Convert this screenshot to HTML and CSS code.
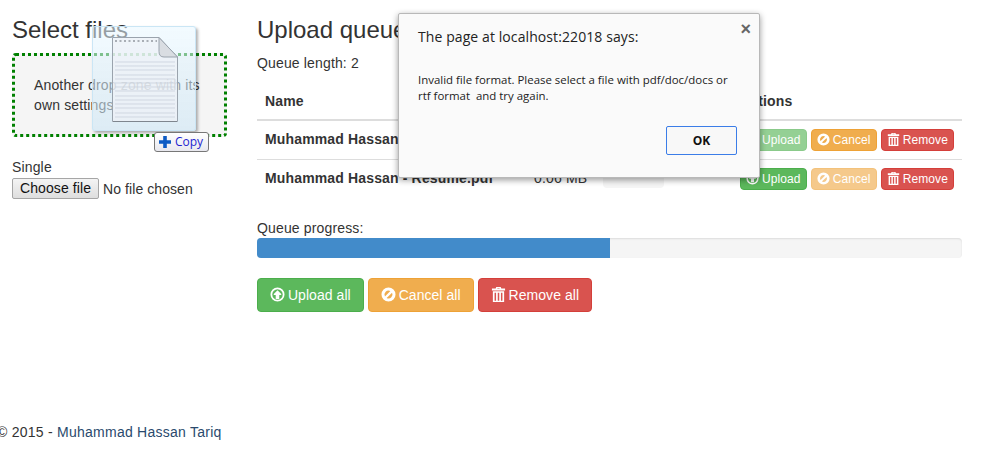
FILE: index.html
```html
<!DOCTYPE html>
<html lang="en">
<head>
<meta charset="utf-8">
<title>File upload</title>
<link rel="stylesheet" href="styles.css">
</head>
<body>
<svg class="defs" width="0" height="0" aria-hidden="true">
  <symbol id="i-up" viewBox="0 0 16 16"><path fill-rule="evenodd" d="M8 .5a7.500 7.500 0 1 1 0 15A7.500 7.500 0 0 1 8 .5zm0 1.900a5.600 5.600 0 1 0 0 11.200A5.600 5.600 0 0 0 8 2.400zM8 3.400l4 4.100v.9H9.900v4.300H6.100V8.400H4v-.9z"/></symbol>
  <symbol id="i-ban" viewBox="0 0 16 16"><path fill-rule="evenodd" d="M8 .5a7.500 7.500 0 1 1 0 15A7.500 7.500 0 0 1 8 .5zM4.200 10l5.800-5.800A4.300 4.300 0 0 0 4.200 10zm1.800 1.800a4.300 4.300 0 0 0 5.800-5.800z"/></symbol>
  <symbol id="i-trash" viewBox="0 0 16 16"><path fill-rule="evenodd" d="M5.600 0h4.800l.6 1.600h4v2H1v-2h4zM6.900 1l-.2.6h2.600l-.2-.6zM2 4.600h12V16H2zM3.800 6v8.600h1.600V6zm3.400 0v8.600h1.600V6zm3.400 0v8.600h1.600V6z"/></symbol>
</svg>

<main class="layout">
  <section class="side">
    <h3 class="heading">Select files</h3>
    <div class="well">Another drop zone with its own settings</div>
    <div class="single-label">Single</div>
    <div class="file-field"><button class="file-btn" type="button">Choose file</button><span class="file-none">No file chosen</span></div>
  </section>

  <section class="queue">
    <h3 class="heading">Upload queue</h3>
    <p class="qlen">Queue length: 2</p>
    <table class="qtable">
      <colgroup><col class="c-name"><col class="c-size"><col class="c-prog"><col class="c-stat"><col class="c-act"></colgroup>
      <thead>
        <tr><th>Name</th><th aria-label="Size"></th><th aria-label="Progress"></th><th aria-label="Status"></th><th>Actions</th></tr>
      </thead>
      <tbody>
        <tr>
          <td class="fname">Muhammad Hassan - Resume.docx</td>
          <td>0.06 MB</td>
          <td><div class="cellbar"></div></td>
          <td></td>
          <td class="acts">
            <button class="btn xs green off" type="button"><svg class="ico"><use href="#i-up"/></svg> Upload</button>
            <button class="btn xs amber" type="button"><svg class="ico"><use href="#i-ban"/></svg> Cancel</button>
            <button class="btn xs red" type="button"><svg class="ico"><use href="#i-trash"/></svg> Remove</button>
          </td>
        </tr>
        <tr>
          <td class="fname">Muhammad Hassan - Resume.pdf</td>
          <td>0.06 MB</td>
          <td><div class="cellbar"></div></td>
          <td></td>
          <td class="acts">
            <button class="btn xs green" type="button"><svg class="ico"><use href="#i-up"/></svg> Upload</button>
            <button class="btn xs amber off" type="button"><svg class="ico"><use href="#i-ban"/></svg> Cancel</button>
            <button class="btn xs red" type="button"><svg class="ico"><use href="#i-trash"/></svg> Remove</button>
          </td>
        </tr>
      </tbody>
    </table>
    <div class="plabel">Queue progress:</div>
    <div class="progress"><div class="progress-fill" style="width:50%"></div></div>
    <div class="all-actions">
      <button class="btn green" type="button"><svg class="ico"><use href="#i-up"/></svg> Upload all</button>
      <button class="btn amber" type="button"><svg class="ico"><use href="#i-ban"/></svg> Cancel all</button>
      <button class="btn red" type="button"><svg class="ico"><use href="#i-trash"/></svg> Remove all</button>
    </div>
  </section>
</main>

<footer class="foot">© 2015 - <span class="foot-name">Muhammad Hassan Tariq</span></footer>

<div class="ghost" aria-hidden="true">
  <svg class="ghost-doc" viewBox="0 0 66 85" width="66" height="85">
    <path d="M.5.5H47L65.500 20V84.500H.5z" fill="#eef1f6" fill-opacity=".72" stroke="#9aa3ad"/>
    <path d="M47 .5V14.500Q47 20 52 20H65.500z" fill="#d9dde2" stroke="#9aa3ad"/>
    <path d="M3 4h42" stroke="#a9aeb5" stroke-width="2" stroke-dasharray="2 2.500"/>
    <path d="M3 25h60M3 29h60M3 33h60M3 38h60M3 42h60M3 46h60M3 50h60M3 54h60M3 59h60M3 63h60M3 67h60M3 71h60M3 76h60M3 80h60" stroke="#c9d1dc" stroke-width="1" stroke-opacity=".8"/>
    <path d="M1 84.500H65" stroke="#7f868e"/>
  </svg>
</div>
<div class="copy-chip" aria-hidden="true">
  <svg class="plus" viewBox="0 0 12 12" width="12" height="12"><path d="M4.200 0h3.600v4.200H12v3.600H7.800V12H4.200V7.800H0V4.200h4.200z" fill="#0d5bc4"/></svg>
  <span>Copy</span>
</div>

<div class="dialog" role="alertdialog">
  <span class="dialog-x">×</span>
  <div class="dialog-title">The page at localhost:22018 says:</div>
  <div class="dialog-msg">Invalid file format. Please select a file with pdf/doc/docs or<br>rtf format &nbsp;and try again.</div>
  <div class="dialog-foot"><button class="dialog-ok" type="button">OK</button></div>
</div>
</body>
</html>
```

FILE: styles.css
```css
* { box-sizing: border-box; }
html, body { margin: 0; padding: 0; }
body {
  width: 986px;
  height: 450px;
  overflow: hidden;
  position: relative;
  background: #fff;
  color: #333;
  font-family: "Liberation Sans", Arial, sans-serif;
  font-size: 14px;
  line-height: 20px;
  letter-spacing: .15px;
}
.defs { position: absolute; }

.layout {
  display: grid;
  grid-template-columns: 215px 705px;
  column-gap: 30px;
  padding: 17px 0 0 12px;
}
.heading {
  margin: 0 0 10px;
  font-size: 24px;
  font-weight: 500;
  line-height: 26.4px;
  letter-spacing: 0;
}

.well {
  height: 84px;
  padding: 19px;
  margin-bottom: 20px;
  background: #f5f5f5;
  border: 3px dotted #008000;
  border-radius: 4px;
}
.file-field { display: flex; align-items: center; margin-top: 1px; }
.file-btn {
  width: 87px;
  height: 21px;
  padding: 0;
  font: 14px/19px "Liberation Sans", Arial, sans-serif;
  letter-spacing: .1px;
  color: #111;
  background: linear-gradient(#f4f4f4, #dedede);
  border: 1px solid #a6a6a6;
  border-radius: 2px;
}
.file-none { margin-left: 4px; letter-spacing: .08px; }

.qlen { margin: 0 0 10px; }
.qtable {
  width: 705px;
  table-layout: fixed;
  border-collapse: collapse;
  margin-bottom: 20px;
}
.c-name { width: 269px; }
.c-size { width: 69px; }
.c-prog { width: 77px; }
.c-stat { width: 60px; }
.c-act { width: 230px; }
.qtable th {
  padding: 8px;
  text-align: left;
  border-bottom: 2px solid #ddd;
}
.qtable td {
  padding: 8px;
  border-top: 1px solid #ddd;
  vertical-align: top;
  white-space: nowrap;
}
.qtable tbody tr:first-child td { border-top: 0; }
.qtable .fname { font-weight: 700; }
.cellbar {
  height: 20px;
  background: #f5f5f5;
  border-radius: 4px;
}
.qtable .acts { font-size: 0; line-height: 0; }
.acts .btn { vertical-align: top; }
.acts .btn + .btn { margin-left: 4px; }

.progress {
  height: 20px;
  background: #f5f5f5;
  border-radius: 4px;
  overflow: hidden;
  box-shadow: inset 0 1px 2px rgba(0,0,0,.1);
  margin-bottom: 20px;
}
.progress-fill { height: 100%; background: #428bca; }

.all-actions { display: flex; gap: 4px; }
.btn {
  display: inline-block;
  padding: 6px 12px;
  font: 14px/20px "Liberation Sans", Arial, sans-serif;
  letter-spacing: .05px;
  color: #fff;
  border: 1px solid transparent;
  border-radius: 4px;
  white-space: nowrap;
}
.btn.xs { padding: 1px 5px; font-size: 12px; line-height: 18px; letter-spacing: .1px; }
.green { background: #5cb85c; border-color: #4cae4c; }
.amber { background: #f0ad4e; border-color: #eea236; }
.red { background: #d9534f; border-color: #d43f3a; }
.off { opacity: .65; }
.ico {
  display: inline-block;
  width: 15px;
  height: 15px;
  margin-right: -1px;
  fill: currentColor;
  vertical-align: -2px;
}
.xs .ico { width: 13px; height: 13px; margin-right: -.5px; vertical-align: -2px; }

.foot { margin: 110px 0 0 -3px; letter-spacing: .25px; }
.foot-name { color: #2a4a6d; }

.ghost {
  position: absolute;
  left: 92px;
  top: 26px;
  width: 104px;
  height: 105px;
  padding: 10px 0 0 19px;
  background: linear-gradient(rgba(232,247,255,.55), rgba(205,230,245,.6));
  border: 1px solid rgba(200,228,245,.9);
  border-radius: 3px;
  box-shadow: 2px 2px 3px rgba(0,0,0,.3);
}
.ghost-doc { display: block; }
.copy-chip {
  position: absolute;
  left: 154px;
  top: 132px;
  width: 55px;
  height: 20px;
  display: flex;
  align-items: center;
  gap: 4px;
  padding-left: 4px;
  font: 12px/18px "Open Sans", sans-serif;
  letter-spacing: 0;
  color: #1d1fd0;
  background: linear-gradient(#fff, #e8e8ee);
  border: 1px solid #777;
  border-radius: 3px;
}

.dialog {
  position: absolute;
  left: 398px;
  top: 13px;
  width: 362px;
  height: 165px;
  padding: 13px 22px 0 19px;
  background: #fafafa;
  border: 1px solid #b8b8b8;
  border-radius: 2px;
  box-shadow: 0 2px 6px rgba(0,0,0,.4);
  font-family: "Open Sans", sans-serif;
  letter-spacing: 0;
  color: #222;
}
.dialog-x {
  position: absolute;
  right: 8px;
  top: 5px;
  font: 700 18px/20px "Liberation Sans", Arial, sans-serif;
  color: #666;
}
.dialog-title { font-size: 14px; line-height: 20px; letter-spacing: .09px; }
.dialog-msg { margin-top: 25px; font-size: 11.45px; line-height: 16px; }
.dialog-foot { display: flex; justify-content: flex-end; margin-top: 22px; }
.dialog-ok {
  width: 71px;
  height: 29px;
  padding: 0;
  font: 700 12px/27px "Open Sans", sans-serif;
  color: #111;
  background: #f8f8f8;
  border: 1px solid #3b7de8;
  border-radius: 2px;
}
```
